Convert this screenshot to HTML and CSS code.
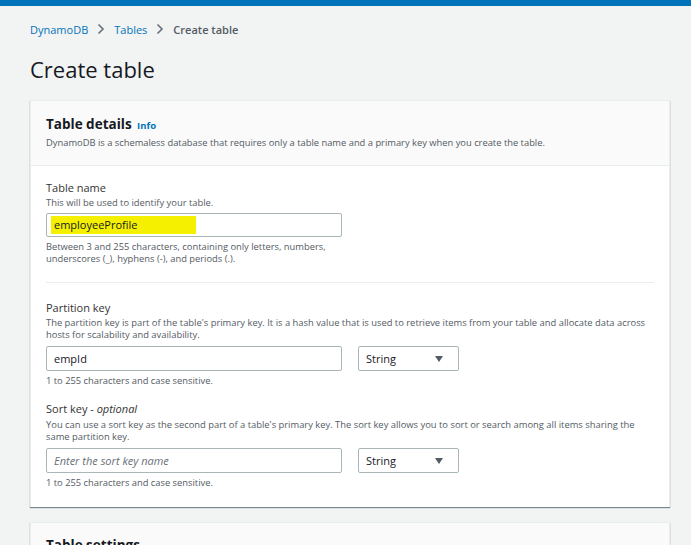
FILE: index.html
```html
<!DOCTYPE html>
<html>
<head>
<meta charset="utf-8">
<link rel="stylesheet" href="styles.css">
</head>
<body>
<div class="topbar"></div>
<main class="page">
  <nav class="crumbs">
    <a class="crumb-link">DynamoDB</a>
    <svg class="chev" viewBox="0 0 8 12" width="8" height="12"><path d="M1.5 1.5 L6 6 L1.5 10.5" fill="none" stroke="#687078" stroke-width="1.6"/></svg>
    <a class="crumb-link">Tables</a>
    <svg class="chev" viewBox="0 0 8 12" width="8" height="12"><path d="M1.5 1.5 L6 6 L1.5 10.5" fill="none" stroke="#687078" stroke-width="1.6"/></svg>
    <span class="crumb-current">Create table</span>
  </nav>
  <h1 class="title">Create table</h1>

  <section class="card">
    <header class="card-head">
      <h2 class="card-title">Table details <a class="info">Info</a></h2>
      <p class="card-desc">DynamoDB is a schemaless database that requires only a table name and a primary key when you create the table.</p>
    </header>
    <div class="card-body">
      <div class="field">
        <div class="label">Table name</div>
        <div class="hint">This will be used to identify your table.</div>
        <div class="input short"><span class="hl">employeeProfile</span></div>
        <div class="constraint">Between 3 and 255 characters, containing only letters, numbers,<br>underscores (_), hyphens (-), and periods (.).</div>
      </div>
      <hr class="divider">
      <div class="field">
        <div class="label">Partition key</div>
        <div class="hint">The partition key is part of the table's primary key. It is a hash value that is used to retrieve items from your table and allocate data across<br>hosts for scalability and availability.</div>
        <div class="row">
          <div class="input">empId</div>
          <div class="select">String <span class="caret"></span></div>
        </div>
        <div class="constraint">1 to 255 characters and case sensitive.</div>
      </div>
      <div class="field sort">
        <div class="label">Sort key - <i>optional</i></div>
        <div class="hint">You can use a sort key as the second part of a table's primary key. The sort key allows you to sort or search among all items sharing the<br>same partition key.</div>
        <div class="row">
          <div class="input placeholder">Enter the sort key name</div>
          <div class="select">String <span class="caret"></span></div>
        </div>
        <div class="constraint">1 to 255 characters and case sensitive.</div>
      </div>
    </div>
  </section>

  <section class="card next">
    <header class="card-head">
      <h2 class="card-title">Table settings</h2>
    </header>
  </section>
</main>
</body>
</html>
```
FILE: styles.css
```css
* { box-sizing: border-box; }
html, body { margin: 0; padding: 0; }
body {
  background: #f2f3f3;
  font-family: "Open Sans", "Noto Sans", sans-serif;
  color: #16191f;
  width: 691px;
  height: 545px;
  overflow: hidden;
}
.topbar { height: 6px; background: #0073bb; }
.page { padding: 0 21px 0 30px; }
.crumbs {
  display: flex;
  align-items: center;
  height: 20px;
  margin-top: 13px;
  font-size: 11px;
}
.crumb-link { color: #0073bb; }
.chev { margin: 0 9px; }
.crumb-current { color: #545b64; font-weight: 600; }
.title {
  font-size: 22px;
  font-weight: 400;
  margin: 15px 0 0;
  line-height: 30px;
  color: #16191f;
}
.card {
  background: #fff;
  margin-top: 16px;
  border: 1px solid #eaeded;
  border-bottom: none;
  box-shadow: 0 1px 1px 0 rgba(0, 28, 36, .5);
}
.card-head {
  background: #fafafa;
  padding: 14px 15px 15px;
  border-bottom: 1px solid #eaeded;
}
.card-title {
  margin: 0;
  font-size: 13.5px;
  font-weight: 700;
  line-height: 18px;
}
.info { color: #0073bb; font-size: 9.5px; font-weight: 700; margin-left: 2px; }
.card-desc {
  margin: 1px 0 0;
  font-size: 9.35px;
  line-height: 14px;
  color: #545b64;
}
.card-body { padding: 13px 15px 18px; }
.label { font-size: 11px; line-height: 17px; color: #333; }
.hint { font-size: 9.4px; line-height: 12px; color: #545b64; margin-top: 1px; }
.sort .hint { margin-top: 2px; }
.input {
  height: 25px;
  border: 1px solid #aab7b8;
  border-radius: 2px;
  margin-top: 4px;
  padding: 0 7px;
  font-size: 11px;
  line-height: 23px;
  color: #16191f;
  width: 296px;
}
.input.short { height: 24px; line-height: 22px; }
.hl { background: #f5f000; padding: 1px 58px 2px 3px; margin-left: -3px; }
.placeholder { color: #687078; font-style: italic; }
.constraint { font-size: 9.35px; line-height: 12px; color: #545b64; margin-top: 4px; }
.divider { border: none; border-top: 1px solid #eaeded; margin: 17px 0 16px; }
.row { display: flex; gap: 16px; margin-top: 5px; }
.row .input { margin-top: 0; }
.select {
  width: 101px;
  height: 25px;
  border: 1px solid #aab7b8;
  border-radius: 2px;
  padding: 0 7px;
  font-size: 11px;
  line-height: 23px;
  color: #16191f;
  display: flex;
  justify-content: space-between;
  align-items: center;
}
.caret {
  width: 0; height: 0;
  border-left: 4px solid transparent;
  border-right: 4px solid transparent;
  border-top: 6px solid #545b64;
  margin-right: 8px;
}
.sort { margin-top: 13px; }
.next { margin-top: 15px; }
.next .card-title { margin-top: -1px; }
```
